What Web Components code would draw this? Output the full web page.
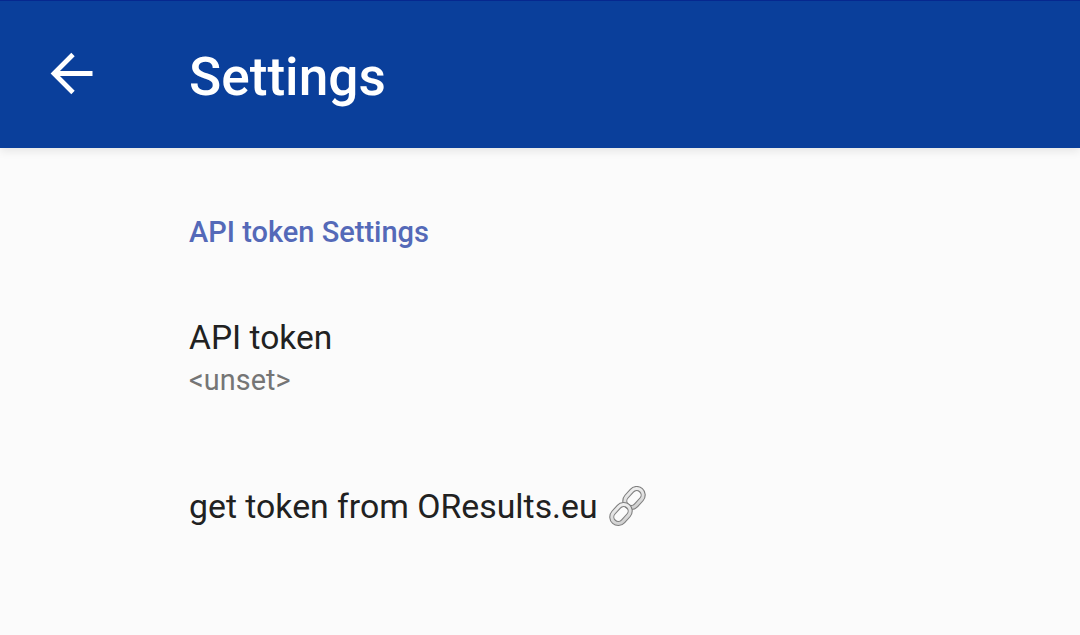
<!DOCTYPE html>
<html><head><meta charset="utf-8">
<style>
html,body{margin:0;height:100%;background:#fbfbfb;overflow:hidden}
body{font-family:Roboto,"Liberation Sans",sans-serif;display:flex;flex-direction:column;height:635px}
</style></head><body>
<app-bar>Settings</app-bar>
<settings-page>
<pref-category>API token Settings</pref-category>
<pref-item summary="<unset>">API token</pref-item>
<pref-link>get token from OResults.eu</pref-link>
</settings-page>
<script>
class Base extends HTMLElement{
  constructor(html){super();this.attachShadow({mode:'open'}).innerHTML=html;}
}
customElements.define('app-bar',class extends Base{constructor(){super(`<style>
:host{display:flex;align-items:center;height:148px;box-sizing:border-box;border-top:1px solid #06288f;background:#0a3f9b;color:#fff;box-shadow:0 3px 9px rgba(0,0,0,.09);position:relative;flex:none}
.ic{width:44px;height:44px;margin-left:50px;margin-right:95px;margin-bottom:3px;flex:none;display:block}
.t{font-size:53.2px;font-weight:500;line-height:60px;padding-top:5px}
</style><svg class="ic" viewBox="0 0 44 44" fill="none" stroke="#fff" stroke-width="4.8"><path d="M42.500 22.500H4M23 3.500 4 22.500 23 41.500"/></svg><span class="t"><slot></slot></span>`)}});
customElements.define('settings-page',class extends Base{constructor(){super(`<style>
:host{display:block;flex:1;padding-left:189px}
</style><slot></slot>`)}});
customElements.define('pref-category',class extends Base{constructor(){super(`<style>
:host{display:block;padding-top:67px;font-size:29px;font-weight:500;line-height:34px;color:#5469b8}
</style><slot></slot>`)}});
customElements.define('pref-item',class extends Base{constructor(){super(`<style>
:host{display:block;padding-top:69px;color:#212121}
.a{font-size:33.5px;line-height:40px;letter-spacing:.03px}
.b{font-size:28.8px;line-height:34px;color:#757575;margin-top:5px;letter-spacing:.1px}
</style><div class="a"><slot></slot></div><div class="b"></div>`)}
connectedCallback(){this.shadowRoot.querySelector('.b').textContent=this.getAttribute('summary')||''}});
customElements.define('pref-link',class extends Base{constructor(){super(`<style>
:host{display:flex;align-items:center;padding-top:89px;font-size:33.8px;line-height:40px;color:#212121}
svg{width:42px;height:42px;margin-left:9px;flex:none}
</style><span><slot></slot></span><svg viewBox="0 0 42 42" fill="none">
<defs><linearGradient id="g" x1="0" y1="0" x2="1" y2="1"><stop offset="0" stop-color="#f2f2f2"/><stop offset="1" stop-color="#cdcdcd"/></linearGradient></defs>
<rect x="20.500" y="1.500" width="13" height="21" rx="6.500" transform="rotate(42 27 12)" stroke="#7f7f7f" stroke-width="5.200"/>
<rect x="20.500" y="1.500" width="13" height="21" rx="6.500" transform="rotate(42 27 12)" stroke="url(#g)" stroke-width="3"/>
<rect x="7.500" y="17.500" width="13" height="21" rx="6.500" transform="rotate(42 14 28)" stroke="#7f7f7f" stroke-width="5.200"/>
<rect x="7.500" y="17.500" width="13" height="21" rx="6.500" transform="rotate(42 14 28)" stroke="url(#g)" stroke-width="3"/>
</svg>`)}});
</script>
</body></html>
